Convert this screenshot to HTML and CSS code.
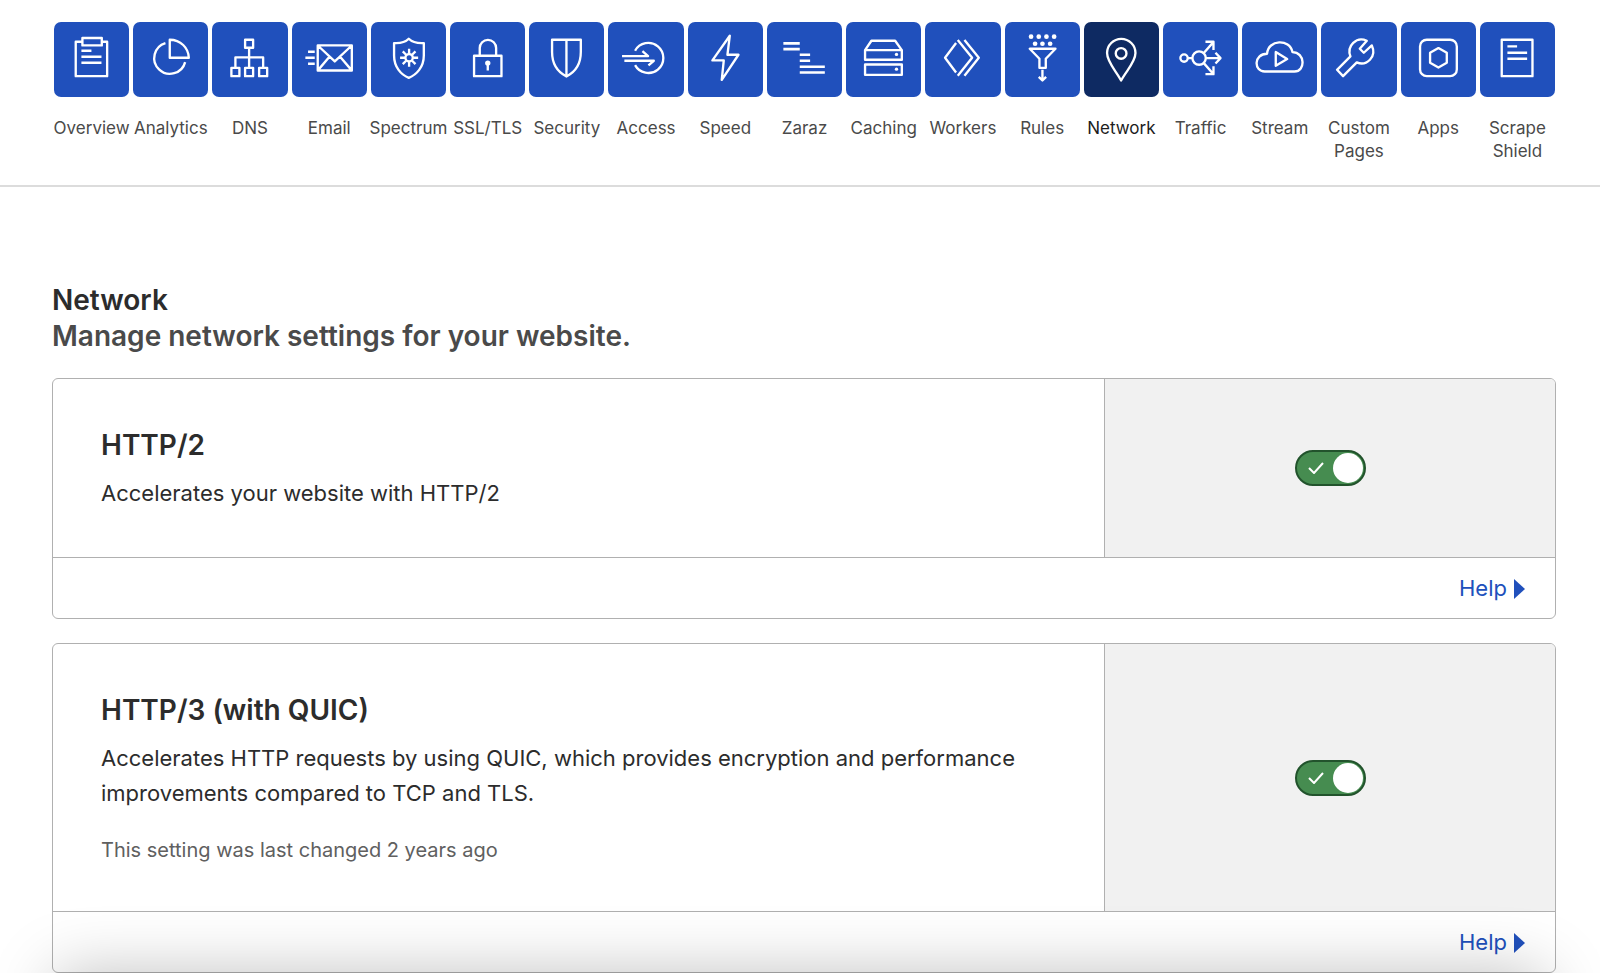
FILE: index.html
```html
<!DOCTYPE html>
<html lang="en">
<head>
<meta charset="utf-8">
<title>Network</title>
<meta name="viewport" content="width=device-width, initial-scale=1">
<link rel="stylesheet" href="styles.css">
</head>
<body>
<header class="topbar">
<nav class="nav" aria-label="Site sections">
<a class="nav-item" href="#"><span class="tile"><svg class="icon" viewBox="0 0 225 225"><path d="M85 59H65V162H159V59H143M85 48H143V70H85ZM82 86H112M82 104H142M82 122H142"/></svg></span><span class="nav-label">Overview</span></a>
<a class="nav-item" href="#"><span class="tile"><svg class="icon" viewBox="0 0 225 225"><path d="M97 63A47 47 0 1 0 156 120M110 53V107H167C166 77 142 53 110 53Z"/></svg></span><span class="nav-label">Analytics</span></a>
<a class="nav-item" href="#"><span class="tile"><svg class="icon" viewBox="0 0 225 225"><path d="M99 53H123V77H99ZM58 137H82V162H58ZM99 137H123V162H99ZM141 137H165V162H141ZM111 77V137M70 137V106H153V137"/></svg></span><span class="nav-label">DNS</span></a>
<a class="nav-item" href="#"><span class="tile"><svg class="icon" viewBox="0 0 225 225"><path d="M77 70H179V145H77ZM78 71L128 118L178 71M78 144L112 104M178 144L144 104M48 89H68M40 107H68M48 125H68"/></svg></span><span class="nav-label">Email</span></a>
<a class="nav-item" href="#"><span class="tile"><svg class="icon" viewBox="0 0 225 225"><path d="M113 50C103 60 85 64 69 63V100C69 135 90 158 113 167C136 158 158 135 158 100V63C141 64 123 60 113 50Z"/><circle cx="114" cy="107" r="11"/><path d="M114 95V80M114 119V134M102 107H87M126 107H141M105 98L95 88M123 98L133 88M105 116L95 126M123 116L133 126"/></svg></span><span class="nav-label">Spectrum</span></a>
<a class="nav-item" href="#"><span class="tile"><svg class="icon" viewBox="0 0 225 225"><path d="M72 101H154V162H72ZM89 101V78a24 24 0 0 1 49 0V101M113 123V145"/><circle class="solid" cx="113" cy="123" r="8"/></svg></span><span class="nav-label">SSL/TLS</span></a>
<a class="nav-item" href="#"><span class="tile"><svg class="icon" viewBox="0 0 225 225"><path d="M69 53H155V90C155 126 138 150 112 163C86 150 69 126 69 90ZM112 53V162"/></svg></span><span class="nav-label">Security</span></a>
<a class="nav-item" href="#"><span class="tile"><svg class="icon" viewBox="0 0 225 225"><path d="M81 86A45 45 0 1 1 81 129M42 102H120L103 87M49 116H137L121 130"/></svg></span><span class="nav-label">Access</span></a>
<a class="nav-item" href="#"><span class="tile"><svg class="icon" viewBox="0 0 225 225"><path d="M125 41L73 115H107L101 173L151 98H118Z"/></svg></span><span class="nav-label">Speed</span></a>
<a class="nav-item" href="#"><span class="tile"><svg class="icon thick" viewBox="0 0 225 225"><path d="M49 64H98M49 81H98M98 98H129M98 116H129M98 134H173M98 151H173"/></svg></span><span class="nav-label">Zaraz</span></a>
<a class="nav-item" href="#"><span class="tile"><svg class="icon" viewBox="0 0 225 225"><path d="M57 84H167V113H57ZM57 84L76 56H147L167 84M57 127H167V158H57Z"/><circle class="solid" cx="151" cy="97" r="5"/><circle class="solid" cx="151" cy="141" r="5"/></svg></span><span class="nav-label">Caching</span></a>
<a class="nav-item" href="#"><span class="tile"><svg class="icon" viewBox="0 0 225 225"><path d="M93 63L60 107L93 151M98 54L141 107L98 161M118 54L161 107L118 161"/></svg></span><span class="nav-label">Workers</span></a>
<a class="nav-item" href="#"><span class="tile"><svg class="icon" viewBox="0 0 225 225"><g class="dots"><circle cx="78" cy="44" r="7"/><circle cx="101" cy="44" r="7"/><circle cx="124" cy="44" r="7"/><circle cx="147" cy="44" r="7"/><circle cx="90" cy="65" r="7"/><circle cx="112" cy="65" r="7"/><circle cx="135" cy="65" r="7"/></g><path d="M74 80H151L122 110V137H103V110ZM112 143V174M101 164L112 175L123 164"/></svg></span><span class="nav-label">Rules</span></a>
<a class="nav-item active" href="#" aria-current="page"><span class="tile"><svg class="icon" viewBox="0 0 225 225"><path d="M111 175C95 145 69 120 69 93a42 42 0 0 1 85 0C154 120 127 145 111 175Z"/><circle cx="111" cy="94" r="16"/></svg></span><span class="nav-label">Network</span></a>
<a class="nav-item" href="#"><span class="tile"><svg class="icon" viewBox="0 0 225 225"><circle cx="63" cy="108" r="11"/><circle cx="108" cy="108" r="20"/><path d="M74 108H88M128 108H170M157 92L172 108L157 124M122 93L150 61M127 59H151V84M122 123L150 155M127 156H151V132"/></svg></span><span class="nav-label">Traffic</span></a>
<a class="nav-item" href="#"><span class="tile"><svg class="icon" viewBox="0 0 225 225"><path d="M68 148C35 148 34 96 75 95C78 52 143 49 151 90C189 90 191 148 157 148ZM101 90V131L135 111Z"/></svg></span><span class="nav-label">Stream</span></a>
<a class="nav-item" href="#"><span class="tile"><svg class="icon" viewBox="0 0 225 225"><path d="M48 143L88 103C76 71 106 42 137 56L116 80L128 92L152 70C168 104 136 133 107 121L66 162Z"/></svg></span><span class="nav-label">Custom Pages</span></a>
<a class="nav-item" href="#"><span class="tile"><svg class="icon" viewBox="0 0 225 225"><rect x="57" y="53" width="110" height="109" rx="20"/><path d="M112 78L137 92V122L112 136L87 122V92Z"/></svg></span><span class="nav-label">Apps</span></a>
<a class="nav-item" href="#"><span class="tile"><svg class="icon" viewBox="0 0 225 225"><path d="M65 53H157V162H65ZM82 73H111M82 92H141M82 110H141"/></svg></span><span class="nav-label">Scrape Shield</span></a>
</nav>
</header>
<main class="page">
<h1 class="title">Network</h1>
<p class="subtitle">Manage network settings for your website.</p>
<section class="card">
<div class="card-main">
<div class="card-text">
<h2 class="card-title" id="http2">HTTP/2</h2>
<p class="card-desc">Accelerates your website with HTTP/2</p>
</div>
<div class="card-control">
<label class="switch"><input class="switch-input" type="checkbox" role="switch" aria-labelledby="http2" checked><svg class="check" viewBox="0 0 16 12"><path d="M1 6L6 11L15 1"/></svg></label>
</div>
</div>
<div class="card-foot"><a class="help" href="#">Help<svg class="caret" viewBox="0 0 11 20"><path d="M0 0L11 10L0 20Z"/></svg></a></div>
</section>
<section class="card">
<div class="card-main">
<div class="card-text">
<h2 class="card-title" id="http3">HTTP/3 (with QUIC)</h2>
<p class="card-desc">Accelerates HTTP requests by using QUIC, which provides encryption and performance improvements compared to TCP and TLS.</p>
<p class="card-note">This setting was last changed 2 years ago</p>
</div>
<div class="card-control">
<label class="switch"><input class="switch-input" type="checkbox" role="switch" aria-labelledby="http3" checked><svg class="check" viewBox="0 0 16 12"><path d="M1 6L6 11L15 1"/></svg></label>
</div>
</div>
<div class="card-foot"><a class="help" href="#">Help<svg class="caret" viewBox="0 0 11 20"><path d="M0 0L11 10L0 20Z"/></svg></a></div>
</section>
</main>
<div class="bottom-shade"></div>
</body>
</html>
```
FILE: styles.css
```css
* { box-sizing: border-box; }
body {
  margin: 0;
  background: #fff;
  color: #2c2c2c;
  font-family: Inter, "Liberation Sans", sans-serif;
  overflow-x: hidden;
}
h1, h2, p { margin: 0; }
a { text-decoration: none; }

.topbar {
  padding: 22px 45px 22px 54px;
  border-bottom: 2px solid #dcdcdc;
}
.nav {
  display: grid;
  grid-template-columns: repeat(19, minmax(0, 1fr));
  gap: 4px;
}
.nav-item {
  display: flex;
  flex-direction: column;
  align-items: center;
  gap: 20px;
  color: #4a4a4a;
}
.tile {
  width: 100%;
  aspect-ratio: 1;
  border-radius: 7px;
  background: #2050bc;
}
.icon {
  display: block;
  width: 100%;
  fill: none;
  stroke: #fff;
  stroke-width: 7;
  stroke-linejoin: round;
}
.thick { stroke-width: 8; }
.solid, .dots { fill: #fff; stroke: none; }
.nav-label {
  font-size: 17px;
  line-height: 23px;
  text-align: center;
}
.active { color: #1d1d1d; }
.active .tile { background: #0e2a62; }

.page { padding: 95px 44px 0 52px; }
.title, .subtitle {
  font-size: 28px;
  line-height: 36px;
  font-weight: 600;
}
.subtitle { color: #4a4a4a; }
.card {
  margin-top: 24px;
  border: 1px solid #b0b0b0;
  border-radius: 6px;
  overflow: hidden;
}
.card-main {
  display: grid;
  grid-template-columns: 7fr 3fr;
  border-bottom: 1px solid #b0b0b0;
}
.card-text { padding: 48px 48px 46px; }
.card-title {
  font-size: 28px;
  line-height: 37px;
  font-weight: 600;
}
.card-desc {
  margin-top: 12px;
  font-size: 22px;
  line-height: 35px;
}
.card-note {
  margin-top: 24px;
  color: #606060;
  font-size: 20px;
  line-height: 30px;
}
.card-control {
  display: flex;
  align-items: center;
  justify-content: center;
  border-left: 1px solid #b0b0b0;
  background: #f1f1f1;
}
.switch {
  position: relative;
  display: flex;
  cursor: pointer;
}
.switch-input {
  appearance: none;
  display: flex;
  align-items: center;
  width: 71px;
  height: 36px;
  margin: 0;
  padding: 0 1px;
  border: 2px solid #22532c;
  border-radius: 18px;
  background: #468c50;
}
.switch-input::before {
  content: "";
  width: 30px;
  height: 30px;
  border-radius: 50%;
  background: #fff;
}
.switch-input:checked { justify-content: flex-end; }
.check {
  position: absolute;
  top: 12px;
  left: 13px;
  width: 16px;
  height: 12px;
  fill: none;
  stroke: #fff;
  stroke-width: 2;
}
.card-foot {
  display: flex;
  justify-content: flex-end;
  padding: 13px 30px 12px;
}
.help {
  display: flex;
  align-items: center;
  gap: 7px;
  color: #2050bc;
  font-size: 22px;
  line-height: 35px;
}
.caret {
  width: 11px;
  height: 20px;
  fill: #2050bc;
}
.bottom-shade {
  position: fixed;
  bottom: -100px;
  left: 56px;
  right: 56px;
  height: 100px;
  box-shadow: 0 0 64px rgba(0, 0, 0, 0.25);
  pointer-events: none;
}
```
